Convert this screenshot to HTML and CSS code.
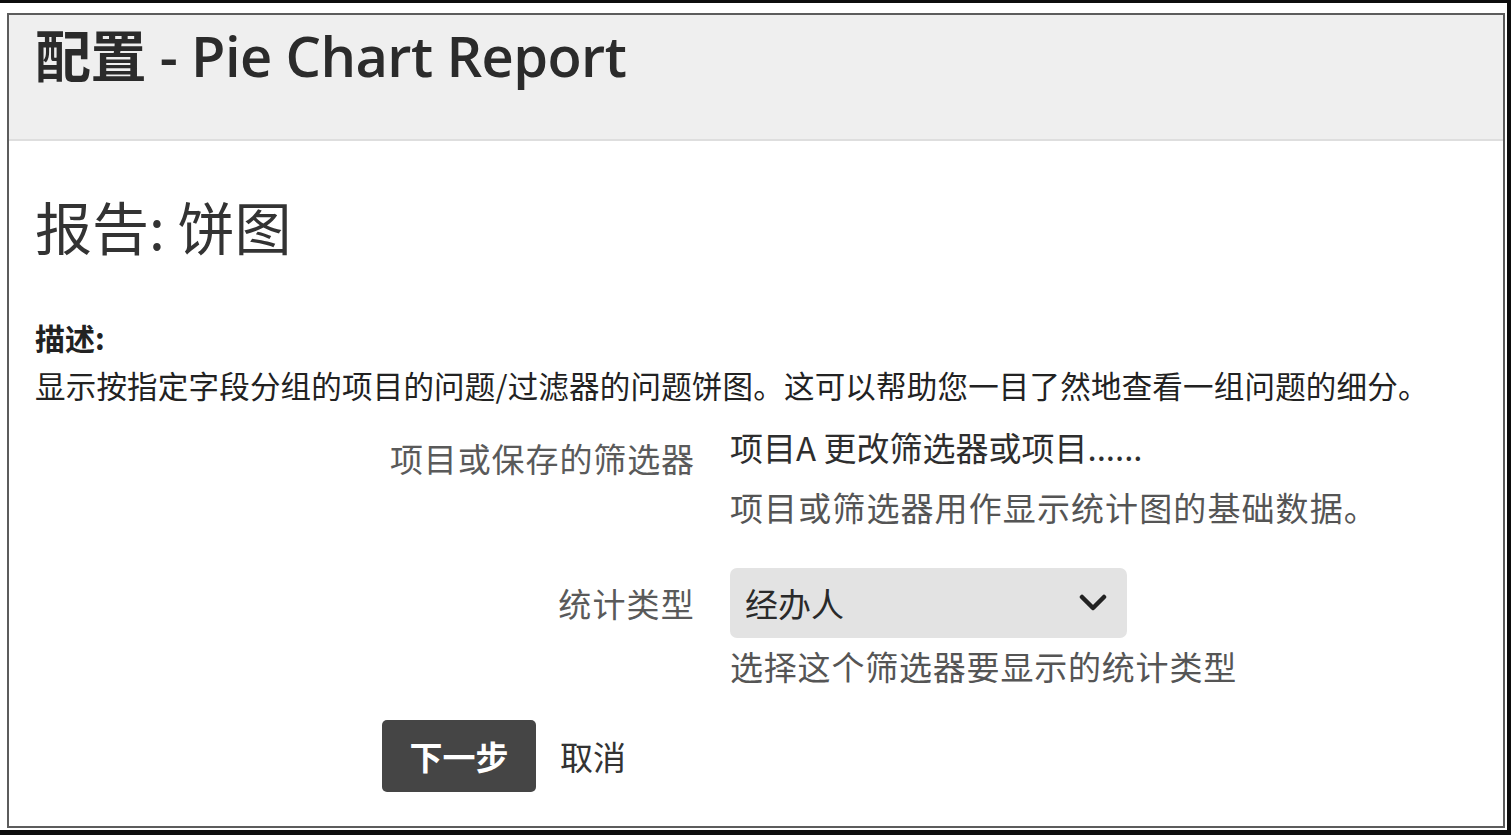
FILE: index.html
```html
<!DOCTYPE html>
<html lang="zh-CN">
<head>
<meta charset="utf-8">
<title>配置 - Pie Chart Report</title>
<link rel="stylesheet" href="styles.css">
</head>
<body>
<div class="screen">
  <div class="panel">
    <div class="panel-header">
      <h1 class="page-title">配置 - Pie Chart Report</h1>
    </div>
    <div class="panel-body">
      <h2 class="report-title">报告: 饼图</h2>
      <div class="desc-label">描述:</div>
      <p class="desc">显示按指定字段分组的项目的问题/过滤器的问题饼图。这可以帮助您一目了然地查看一组问题的细分。</p>
      <form class="form">
        <div class="field-row">
          <label class="field-label label-offset">项目或保存的筛选器</label>
          <div class="field-control">
            <div class="field-value">项目A 更改筛选器或项目......</div>
            <div class="field-help help-first">项目或筛选器用作显示统计图的基础数据。</div>
          </div>
        </div>
        <div class="field-row row-second">
          <label class="field-label label-select">统计类型</label>
          <div class="field-control">
            <div class="select">
              <span class="select-text">经办人</span>
              <svg class="chevron" width="28" height="18" viewBox="0 0 28 18"><polyline points="3,3 14,14 25,3" fill="none" stroke="#222" stroke-width="4.5" stroke-linecap="round" stroke-linejoin="round"/></svg>
            </div>
            <div class="field-help help-second">选择这个筛选器要显示的统计类型</div>
          </div>
        </div>
        <div class="actions">
          <button type="button" class="btn-primary">下一步</button>
          <a class="btn-link">取消</a>
        </div>
      </form>
    </div>
  </div>
</div>
</body>
</html>
```

FILE: styles.css
```css
html, body {
  margin: 0;
  padding: 0;
  background: #0d0d0d;
}
body {
  font-family: "Noto Sans CJK SC", "Noto Sans", sans-serif;
  color: #333;
}
.screen {
  background: #ffffff;
  margin: 3px 4px 0 0;
  height: 827px;
  padding: 10px 2px 2px 7px;
  box-sizing: border-box;
}
.panel {
  border: 2px solid #5c5c5c;
  height: 100%;
  box-sizing: border-box;
  background: #fff;
}
.panel-header {
  background: #efefef;
  height: 126px;
  border-bottom: 2px solid #dedede;
  padding: 5px 26px 0;
  box-sizing: border-box;
}
.page-title {
  margin: 0;
  font-family: "Open Sans", "Noto Sans CJK SC", sans-serif;
  font-size: 56px;
  line-height: 70px;
  font-weight: 600;
  color: #2b2b2b;
  letter-spacing: -0.6px;
}
.panel-body {
  padding: 0 26px;
}
.report-title {
  margin: 49px 0 0;
  font-size: 57px;
  line-height: 70px;
  font-weight: 400;
  color: #333;
}
.desc-label {
  margin-top: 57px;
  font-size: 30px;
  line-height: 40px;
  font-weight: 700;
  color: #222;
}
.desc {
  margin: 6px 0 0;
  font-size: 30.5px;
  line-height: 44px;
  color: #222;
  letter-spacing: 0.2px;
  white-space: nowrap;
}
.form {
  margin-top: 18px;
}
.field-row {
  display: grid;
  grid-template-columns: 660px 1fr;
  column-gap: 35px;
  align-items: start;
}
.row-second {
  margin-top: 39px;
}
.field-label {
  text-align: right;
  font-size: 33px;
  line-height: 44px;
  color: #5a5a5a;
}
.label-offset {
  padding-top: 11px;
  letter-spacing: 0.9px;
}
.label-select {
  padding-top: 13px;
  letter-spacing: 1.2px;
}
.field-value {
  font-size: 33px;
  line-height: 44px;
  color: #2e2e2e;
}
.field-help {
  font-size: 33px;
  line-height: 44px;
  color: #555;
}
.help-first {
  margin-top: 16px;
  letter-spacing: 1.1px;
}
.help-second {
  margin-top: 6px;
  letter-spacing: 0.8px;
}
.select {
  width: 397px;
  height: 70px;
  box-sizing: border-box;
  background: #e3e3e3;
  border-radius: 7px;
  display: flex;
  align-items: center;
  justify-content: space-between;
  padding: 0 20px 0 15px;
}
.select-text {
  font-size: 33px;
  line-height: 44px;
  color: #2a2a2a;
}
.chevron {
  display: block;
}
.actions {
  display: flex;
  align-items: center;
  gap: 24px;
  margin-top: 32px;
  padding-left: 347px;
}
.btn-primary {
  width: 154px;
  height: 72px;
  border: none;
  border-radius: 5px;
  background: #454545;
  color: #fff;
  font-family: inherit;
  font-size: 33px;
  font-weight: 700;
  padding: 0;
}
.btn-link {
  font-size: 33px;
  line-height: 44px;
  color: #333;
}
```
